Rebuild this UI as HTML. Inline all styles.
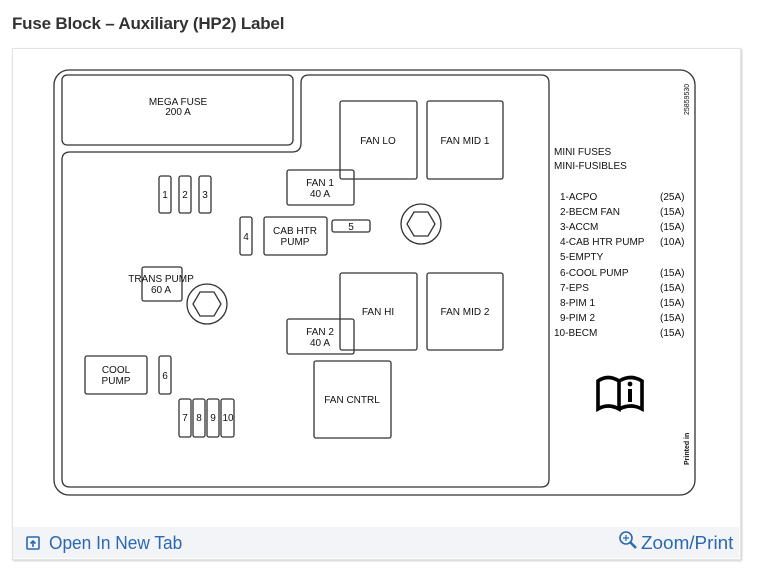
<!DOCTYPE html>
<html><head><meta charset="utf-8"><style>
html,body{margin:0;padding:0;width:758px;height:580px;background:#fff;overflow:hidden;font-family:"Liberation Sans",sans-serif}
.t{position:absolute;left:12px;top:14px;font-size:17px;font-weight:bold;color:#333;letter-spacing:-0.2px;transform:scaleX(1.0);transform-origin:left top;white-space:nowrap}
.card{position:absolute;left:12px;top:48px;width:727px;height:510px;border:1px solid #e2e2e2;box-shadow:1px 1px 2px #ccc;background:#fff}
.foot{position:absolute;left:13px;top:527px;width:726px;height:31px;background:#f2f4f8}
.lnk{position:absolute;top:533px;font-size:18px;color:#2a68b0;transform:scaleX(0.96);transform-origin:left top;white-space:nowrap}
svg{position:absolute;left:0;top:0}
svg text{font-family:"Liberation Sans",sans-serif;font-size:10px;fill:#111}
</style></head><body>
<div class="t">Fuse Block – Auxiliary (HP2) Label</div>
<div class="card"></div>
<div class="foot"></div>
<svg width="758" height="580" viewBox="0 0 758 580">
<g fill="none" stroke="#333" stroke-width="1.3">
<rect x="54" y="70" width="641" height="425" rx="15"/>
<rect x="62" y="75" width="231" height="70" rx="5"/>
<path d="M70 152 H292 Q301 152 301 143 V83 Q301 75 309 75 H541 Q549 75 549 83 V479 Q549 487 541 487 H70 Q62 487 62 479 V160 Q62 152 70 152 Z"/>
<rect x="340" y="101" width="77" height="78" rx="2"/>
<rect x="427" y="101" width="76" height="78" rx="2"/>
<rect x="340" y="273" width="77" height="77" rx="2"/>
<rect x="427" y="273" width="76" height="77" rx="2"/>
<rect x="314" y="361" width="77" height="77" rx="2"/>
<rect x="287" y="170" width="67" height="35" rx="2"/>
<rect x="287" y="319" width="67" height="35" rx="2"/>
<rect x="264" y="217" width="63" height="38" rx="2"/>
<rect x="332" y="220" width="38" height="12" rx="2"/>
<rect x="240" y="217" width="12" height="38" rx="2"/>
<rect x="159" y="176" width="12" height="37" rx="2"/>
<rect x="179" y="176" width="12" height="37" rx="2"/>
<rect x="199" y="176" width="12" height="37" rx="2"/>
<rect x="142" y="267" width="40" height="34" rx="2"/>
<rect x="85" y="356" width="62" height="38" rx="2"/>
<rect x="159" y="356" width="12" height="38" rx="2"/>
<rect x="179" y="399" width="12" height="38" rx="2"/>
<rect x="193" y="399" width="12" height="38" rx="2"/>
<rect x="207" y="399" width="12" height="38" rx="2"/>
<rect x="221" y="399" width="13" height="38" rx="2"/>
<circle cx="421" cy="224" r="20"/>
<polygon points="407,224 414,212 428,212 435,224 428,236 414,236"/>
<circle cx="207" cy="304" r="20"/>
<polygon points="193,304 200,292 214,292 221,304 214,316 200,316"/>
</g>
<g text-anchor="middle">
<text x="178" y="105">MEGA FUSE</text><text x="178" y="115">200 A</text>
<text x="378" y="144">FAN LO</text>
<text x="465" y="144">FAN MID 1</text>
<text x="378" y="315">FAN HI</text>
<text x="465" y="315">FAN MID 2</text>
<text x="352" y="403">FAN CNTRL</text>
<text x="320" y="186">FAN 1</text><text x="320" y="197">40 A</text>
<text x="320" y="335">FAN 2</text><text x="320" y="346">40 A</text>
<text x="295" y="234">CAB HTR</text><text x="295" y="245">PUMP</text>
<text x="161" y="282">TRANS PUMP</text><text x="161" y="293">60 A</text>
<text x="116" y="373">COOL</text><text x="116" y="384">PUMP</text>
<g style="font-size:9px">
<text x="165" y="198">1</text><text x="185" y="198">2</text><text x="205" y="198">3</text>
<text x="246" y="240">4</text><text x="351" y="230">5</text><text x="165" y="379">6</text>
<text x="185" y="421">7</text><text x="199" y="421">8</text><text x="213" y="421">9</text><text x="228" y="421">10</text>
</g>
</g>
<text x="554" y="155">MINI FUSES</text>
<text x="554" y="169">MINI-FUSIBLES</text>
<g>
<text x="560" y="200">1-ACPO</text><text x="660" y="200">(25A)</text>
<text x="560" y="215">2-BECM FAN</text><text x="660" y="215">(15A)</text>
<text x="560" y="230">3-ACCM</text><text x="660" y="230">(15A)</text>
<text x="560" y="245">4-CAB HTR PUMP</text><text x="660" y="245">(10A)</text>
<text x="560" y="260">5-EMPTY</text>
<text x="560" y="276">6-COOL PUMP</text><text x="660" y="276">(15A)</text>
<text x="560" y="291">7-EPS</text><text x="660" y="291">(15A)</text>
<text x="560" y="306">8-PIM 1</text><text x="660" y="306">(15A)</text>
<text x="560" y="321">9-PIM 2</text><text x="660" y="321">(15A)</text>
<text x="554" y="336">10-BECM</text><text x="660" y="336">(15A)</text>
</g>
<text transform="translate(689,115) rotate(-90)" style="font-size:7px">25859530</text>
<text transform="translate(689,465) rotate(-90)" style="font-size:7px;font-weight:bold">Printed in</text>
<g stroke="#000" stroke-width="3.6" fill="none">
<path d="M598 409 V381 Q608 374 619 381 V409 Q608 403 598 409 Z"/>
<path d="M619 381 Q631 374 642 381 V409 Q631 403 619 409"/>
</g>
<rect x="628" y="389" width="4" height="13" fill="#000"/>
<circle cx="630" cy="384" r="2.4" fill="#000"/>
<g stroke="#2a68b0" stroke-width="1.6" fill="none">
<rect x="27" y="537" width="12" height="12" rx="1"/>
<path d="M33 547 V541 M30.5 543.5 L33 541 L35.5 543.5"/>
<circle cx="626" cy="538" r="6"/>
<path d="M630.5 542.5 L636 548" stroke-width="2.4"/>
<path d="M626 535 V541 M623 538 H629" stroke-width="1.2"/>
</g>
</svg>
<div class="lnk" style="left:49px">Open In New Tab</div>
<div class="lnk" style="left:641px;transform:scaleX(1.05)">Zoom/Print</div>
</body></html>
